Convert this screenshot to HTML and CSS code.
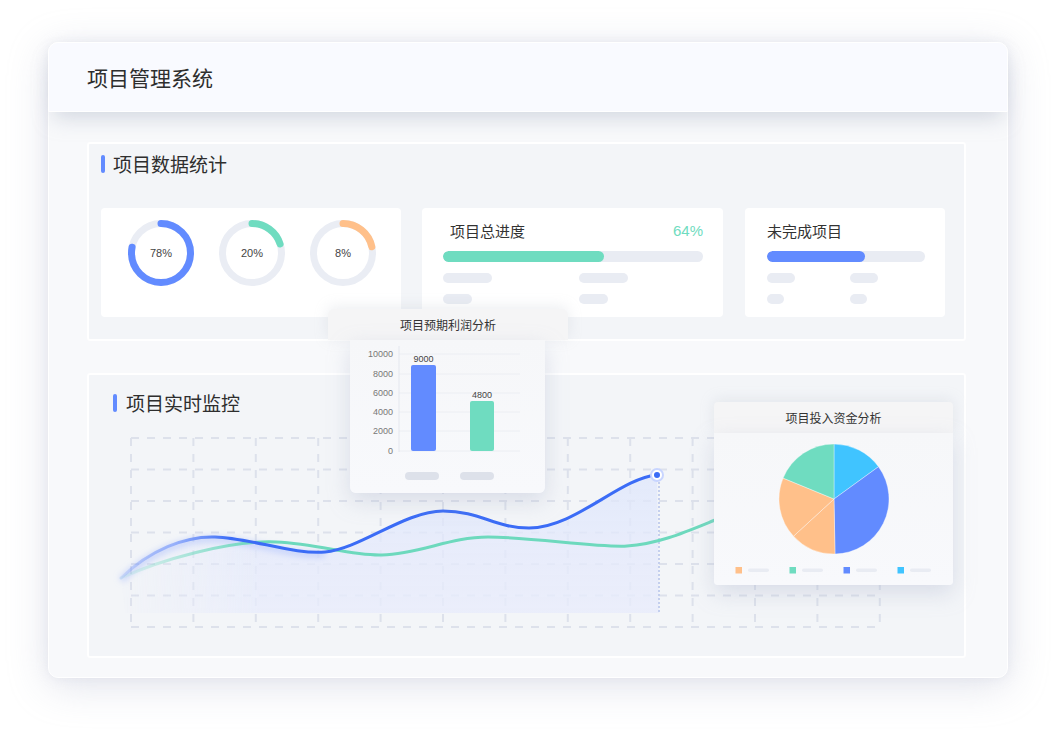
FILE: index.html
```html
<!DOCTYPE html>
<html lang="zh-CN">
<head>
<meta charset="utf-8">
<title>项目管理系统</title>
<link rel="stylesheet" href="styles.css">
</head>
<body>
<div class="stage">
  <div class="window">
    <header class="win-header"><h1>项目管理系统</h1></header>
    <div class="win-body">
      <section class="panel stats">
        <h2 class="panel-title">项目数据统计</h2>
        <div class="cards">
          <div class="card donuts">
            <svg class="donut" viewBox="0 0 66 66" width="66" height="66">
              <circle cx="33" cy="33" r="29.5" class="track"/>
              <circle cx="33" cy="33" r="29.5" class="arc arc-blue" stroke-dasharray="144.6 185.4" transform="rotate(-90 33 33)"/>
              <text x="33" y="37" class="donut-label">78%</text>
            </svg>
            <svg class="donut" viewBox="0 0 66 66" width="66" height="66">
              <circle cx="33" cy="33" r="29.5" class="track"/>
              <circle cx="33" cy="33" r="29.5" class="arc arc-teal" stroke-dasharray="37.1 185.4" transform="rotate(-90 33 33)"/>
              <text x="33" y="37" class="donut-label">20%</text>
            </svg>
            <svg class="donut" viewBox="0 0 66 66" width="66" height="66">
              <circle cx="33" cy="33" r="29.5" class="track"/>
              <circle cx="33" cy="33" r="29.5" class="arc arc-orange" stroke-dasharray="40 185.4" transform="rotate(-90 33 33)"/>
              <text x="33" y="37" class="donut-label">8%</text>
            </svg>
          </div>
          <div class="card prog prog-total">
            <div class="prog-head"><span class="prog-name">项目总进度</span><span class="prog-pct">64%</span></div>
            <div class="bar"><div class="bar-fill teal" style="width:62%"></div></div>
            <div class="skel-grid">
              <span class="skel w49"></span><span class="skel w49"></span>
              <span class="skel w29"></span><span class="skel w29"></span>
            </div>
          </div>
          <div class="card prog prog-open">
            <div class="prog-head"><span class="prog-name">未完成项目</span></div>
            <div class="bar"><div class="bar-fill blue" style="width:62%"></div></div>
            <div class="skel-grid">
              <span class="skel w28"></span><span class="skel w28"></span>
              <span class="skel w17"></span><span class="skel w17"></span>
            </div>
          </div>
        </div>
      </section>

      <section class="panel monitor">
        <h2 class="panel-title">项目实时监控</h2>
        <svg class="line-chart" viewBox="89 430 874 210" width="874" height="210">
          <defs>
            <linearGradient id="areaGrad" x1="0" y1="0" x2="0" y2="1">
              <stop offset="0" stop-color="#dfe6fb" stop-opacity="0.75"/>
              <stop offset="1" stop-color="#e8ecfb" stop-opacity="0.8"/>
            </linearGradient>
            <linearGradient id="areaFade" gradientUnits="userSpaceOnUse" x1="115" y1="0" x2="260" y2="0">
              <stop offset="0" stop-color="#fff" stop-opacity="0"/>
              <stop offset="1" stop-color="#fff" stop-opacity="1"/>
            </linearGradient>
            <mask id="fadeMask">
              <rect x="89" y="430" width="874" height="210" fill="url(#areaFade)"/>
            </mask>
            <linearGradient id="blueFade" gradientUnits="userSpaceOnUse" x1="115" y1="0" x2="230" y2="0">
              <stop offset="0" stop-color="#3b6cf6" stop-opacity="0.05"/>
              <stop offset="0.5" stop-color="#7d9dfb" stop-opacity="0.7"/>
              <stop offset="1" stop-color="#3b6cf6" stop-opacity="1"/>
            </linearGradient>
            <linearGradient id="tealFade" gradientUnits="userSpaceOnUse" x1="115" y1="0" x2="260" y2="0">
              <stop offset="0" stop-color="#6dd9bd" stop-opacity="0.05"/>
              <stop offset="1" stop-color="#6dd9bd" stop-opacity="1"/>
            </linearGradient>
            <filter id="glow" x="-10%" y="-50%" width="120%" height="200%">
              <feGaussianBlur stdDeviation="3"/>
            </filter>
          </defs>
          <path class="grid" d="M131,438V627 M193.4,438V627 M255.8,438V627 M318.2,438V627 M380.6,438V627 M443,438V627 M505.4,438V627 M567.8,438V627 M630.2,438V627 M692.6,438V627 M755,438V627 M817.4,438V627 M879.8,438V627 M131,438H881 M131,469.5H881 M131,501H881 M131,532.5H881 M131,564H881 M131,595.5H881 M131,627H881"/>
          <path d="M121,578 C150,550 185,536 215,537 C250,538 295,555 325,552 C360,549 405,511 443,511 C480,511 495,528 529,528 C575,528 620,478 657,475 L659,613 L125,613 Z" fill="url(#areaGrad)" mask="url(#fadeMask)"/>
          <path class="dotted" d="M659,482V613"/>
          <path d="M121,580 C150,552 185,538 215,539 C250,540 295,557 325,554" fill="none" stroke="#9fb5fb" stroke-width="6" stroke-opacity="0.5" filter="url(#glow)"/>
          <path d="M121,578 C160,560 230,540 276,542 C320,544 350,556 382,555 C420,554 450,537 488,537 C530,537 600,548 627,546 C660,544 690,530 720,518 C740,510 760,500 790,488" fill="none" stroke="url(#tealFade)" stroke-width="3" stroke-linecap="round"/>
          <path d="M121,578 C150,550 185,536 215,537 C250,538 295,555 325,552 C360,549 405,511 443,511 C480,511 495,528 529,528 C575,528 620,478 657,475" fill="none" stroke="url(#blueFade)" stroke-width="3" stroke-linecap="round"/>
          <circle cx="657" cy="475" r="6" fill="#fff" stroke="#c8d5ff" stroke-width="2"/>
          <circle cx="657" cy="475" r="3" fill="#3b6cf6"/>
        </svg>
      </section>
    </div>

    <div class="popup bar-pop">
      <div class="pop-head">项目预期利润分析</div>
      <div class="pop-body bar-body">
        <svg viewBox="350 340 195 153" width="195" height="153">
          <g class="gridlines">
            <path d="M399,354H520 M399,374H520 M399,393H520 M399,412H520 M399,431H520 M399,451H520"/>
          </g>
          <path d="M399,346V452" class="axis"/>
          <g class="ylab">
            <text x="393" y="357">10000</text>
            <text x="393" y="377">8000</text>
            <text x="393" y="396">6000</text>
            <text x="393" y="415">4000</text>
            <text x="393" y="434">2000</text>
            <text x="393" y="454">0</text>
          </g>
          <rect x="411" y="365" width="25" height="86" rx="2" fill="#628bff"/>
          <rect x="470" y="401" width="24" height="50" rx="2" fill="#6fdcc0"/>
          <text x="423.5" y="362" class="vlab">9000</text>
          <text x="482" y="398" class="vlab">4800</text>
          <rect x="405" y="472" width="34" height="8" rx="4" fill="#dde1ea"/>
          <rect x="460" y="472" width="34" height="8" rx="4" fill="#dde1ea"/>
        </svg>
      </div>
    </div>

    <div class="popup pie-pop">
      <div class="pop-head">项目投入资金分析</div>
      <div class="pop-body pie-body">
        <svg viewBox="714 433 239 152" width="239" height="152">
          <g class="slices">
            <path d="M834,499 L834,444 A55,55 0 0 1 878.5,466.7 Z" fill="#40c4ff"/>
            <path d="M834,499 L878.5,466.7 A55,55 0 0 1 835,554 Z" fill="#628bff"/>
            <path d="M834,499 L835,554 A55,55 0 0 1 793.5,536.2 Z" fill="#ffc08a"/>
            <path d="M834,499 L793.5,536.2 A55,55 0 0 1 783.1,478.1 Z" fill="#ffc08a"/>
            <path d="M834,499 L783.1,478.1 A55,55 0 0 1 834,444 Z" fill="#6fdcc0"/>
          </g>
          <rect x="735.5" y="567" width="6.5" height="6.5" fill="#ffc08a"/>
          <rect x="748" y="568.5" width="21" height="3.5" rx="1.75" fill="#e9ecf3"/>
          <rect x="789.5" y="567" width="6.5" height="6.5" fill="#6fdcc0"/>
          <rect x="802" y="568.5" width="21" height="3.5" rx="1.75" fill="#e9ecf3"/>
          <rect x="843.5" y="567" width="6.5" height="6.5" fill="#628bff"/>
          <rect x="856" y="568.5" width="21" height="3.5" rx="1.75" fill="#e9ecf3"/>
          <rect x="897.5" y="567" width="6.5" height="6.5" fill="#40c4ff"/>
          <rect x="910" y="568.5" width="21" height="3.5" rx="1.75" fill="#e9ecf3"/>
        </svg>
      </div>
    </div>
  </div>
</div>
</body>
</html>
```

FILE: styles.css
```css
* { box-sizing: border-box; }
html, body {
  margin: 0;
  padding: 0;
  background: #ffffff;
}
body {
  width: 1056px;
  height: 732px;
  overflow: hidden;
  font-family: "Noto Sans CJK SC", "Noto Sans", sans-serif;
  color: #333;
}
.stage {
  padding: 42px 48px 54px 48px;
}
.window {
  position: relative;
  width: 960px;
  height: 636px;
  border-radius: 10px;
  background: #f8f9fb;
  border: 1px solid #ffffff;
  box-shadow: 0 8px 40px rgba(165, 172, 195, 0.32), 0 0 12px rgba(200, 205, 220, 0.25);
}
.win-header {
  position: relative;
  z-index: 1;
  height: 70px;
  margin: -1px -1px 0 -1px;
  padding-left: 38px;
  display: flex;
  align-items: center;
  background: #f9faff;
  border: 1px solid #ffffff;
  border-radius: 10px 10px 0 0;
  box-shadow: 0 12px 20px -6px rgba(175, 183, 200, 0.5);
}
.win-header h1 {
  margin: 0;
  font-size: 21px;
  font-weight: 400;
  line-height: 24px;
  color: #2e2e2e;
}
.win-body {
  display: flex;
  flex-direction: column;
  gap: 32px;
  padding: 30px 41px 0 38px;
}
.panel {
  background: #f3f5f8;
  border: 2px solid rgba(255, 255, 255, 0.95);
  border-radius: 3px;
}
.panel-title {
  display: flex;
  align-items: center;
  gap: 8px;
  margin: 0;
  font-size: 19px;
  font-weight: 400;
  line-height: 20px;
  color: #2e2e2e;
}
.panel-title::before {
  content: "";
  width: 4px;
  height: 18px;
  border-radius: 2px;
  background: #628bff;
}
.stats {
  height: 199px;
  padding: 10px 18px 0 12px;
}
.cards {
  display: flex;
  gap: 21px;
  margin-top: 34px;
}
.card {
  height: 109px;
  background: #ffffff;
  border-radius: 4px;
}
.donuts {
  width: 300px;
  display: flex;
  gap: 25px;
  padding: 12px 0 0 27px;
}
.donut .track {
  fill: none;
  stroke: #eaedf4;
  stroke-width: 7;
}
.donut .arc {
  fill: none;
  stroke-width: 7;
  stroke-linecap: round;
}
.arc-blue { stroke: #628bff; }
.arc-teal { stroke: #6fdcc0; }
.arc-orange { stroke: #ffc08a; }
.donut-label {
  font-family: "Liberation Sans", "Noto Sans", sans-serif;
  font-size: 11px;
  fill: #444;
  text-anchor: middle;
}
.prog {
  padding: 13px 20px 0 21px;
}
.prog-total { width: 301px; }
.prog-open { width: 200px; padding-left: 22px; margin-left: 1px; }
.prog-head {
  display: flex;
  justify-content: space-between;
  align-items: center;
  height: 20px;
  font-size: 15px;
  line-height: 20px;
  color: #333;
}
.prog-total .prog-name { padding-left: 7px; }
.prog-pct {
  font-family: "Liberation Sans", "Noto Sans", sans-serif;
  color: #6fdcc0;
  font-size: 15px;
}
.bar {
  margin-top: 10px;
  height: 11px;
  border-radius: 6px;
  background: #e9ecf3;
  overflow: hidden;
}
.bar-fill {
  height: 100%;
  border-radius: 6px;
}
.bar-fill.teal { background: #6fdcc0; }
.bar-fill.blue { background: #628bff; }
.skel-grid {
  display: grid;
  grid-template-columns: 136px auto;
  row-gap: 11px;
  margin-top: 11px;
}
.prog-open .skel-grid { grid-template-columns: 83px auto; }
.skel {
  display: block;
  height: 10px;
  border-radius: 5px;
  background: #e9ecf3;
}
.w49 { width: 49px; }
.w29 { width: 29px; }
.w28 { width: 28px; }
.w17 { width: 17px; }
.monitor {
  height: 285px;
  padding-top: 18px;
}
.monitor .panel-title {
  padding-left: 24px;
  gap: 9px;
}
.line-chart {
  display: block;
  margin-top: 17px;
}
.grid {
  fill: none;
  stroke: #dde1eb;
  stroke-width: 2;
  stroke-dasharray: 8 8;
}
.dotted {
  fill: none;
  stroke: #c4cfee;
  stroke-width: 2;
  stroke-dasharray: 2 2;
}
.popup {
  position: absolute;
  z-index: 2;
  font-family: "Noto Sans CJK SC", sans-serif;
}
.pop-head {
  height: 31px;
  line-height: 31px;
  text-align: center;
  font-size: 12px;
  color: #333;
  background: #f5f5f6;
  border-radius: 6px 6px 0 0;
  box-shadow: 0 -2px 14px rgba(180, 186, 200, 0.25);
}
.pop-body {
  background: linear-gradient(#f6f7f9, #f8f9fc);
  border-radius: 0 0 6px 6px;
  box-shadow: 0 8px 22px rgba(165, 175, 200, 0.35);
}
.pop-body svg { display: block; }
.bar-pop {
  left: 279px;
  top: 266px;
  width: 240px;
}
.bar-body {
  width: 195px;
  height: 153px;
  margin-left: 22px;
}
.gridlines path {
  fill: none;
  stroke: #eceef3;
  stroke-width: 1;
}
.axis {
  fill: none;
  stroke: #e4e7ee;
  stroke-width: 1;
}
.ylab text {
  font-family: "Liberation Sans", sans-serif;
  font-size: 9px;
  fill: #777;
  text-anchor: end;
}
.vlab {
  font-family: "Liberation Sans", sans-serif;
  font-size: 9px;
  fill: #444;
  text-anchor: middle;
}
.pie-pop {
  left: 665px;
  top: 359px;
  width: 239px;
}
.pie-pop .pop-head {
  border-radius: 4px 4px 0 0;
}
.pie-body {
  height: 152px;
  border-radius: 0 0 4px 4px;
}
.slices path {
  stroke: #ffffff;
  stroke-width: 0.6;
  stroke-opacity: 0.6;
}
```
